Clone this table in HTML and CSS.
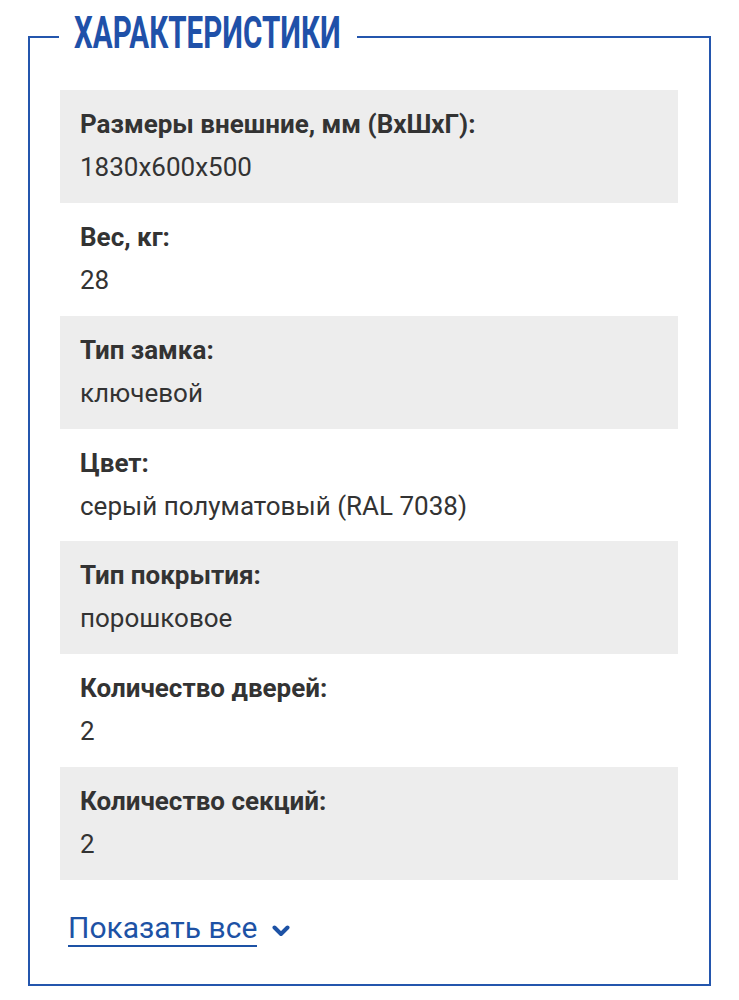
FILE: index.html
```html
<!DOCTYPE html>
<html lang="ru">
<head>
<meta charset="utf-8">
<title>Характеристики</title>
<link rel="stylesheet" href="styles.css">
</head>
<body>
<fieldset class="specs">
  <legend class="specs-title"><span class="specs-title-box"><span class="specs-title-text">ХАРАКТЕРИСТИКИ</span></span></legend>
  <div class="specs-list">
    <div class="spec spec-alt">
      <div class="spec-label">Размеры внешние, мм (ВхШхГ):</div>
      <div class="spec-value">1830x600x500</div>
    </div>
    <div class="spec">
      <div class="spec-label">Вес, кг:</div>
      <div class="spec-value">28</div>
    </div>
    <div class="spec spec-alt">
      <div class="spec-label">Тип замка:</div>
      <div class="spec-value">ключевой</div>
    </div>
    <div class="spec">
      <div class="spec-label">Цвет:</div>
      <div class="spec-value">серый полуматовый (RAL 7038)</div>
    </div>
    <div class="spec spec-alt">
      <div class="spec-label">Тип покрытия:</div>
      <div class="spec-value">порошковое</div>
    </div>
    <div class="spec">
      <div class="spec-label">Количество дверей:</div>
      <div class="spec-value">2</div>
    </div>
    <div class="spec spec-alt">
      <div class="spec-label">Количество секций:</div>
      <div class="spec-value">2</div>
    </div>
  </div>
  <a class="show-all" href="#">
    <span class="show-all-text">Показать все</span>
    <svg class="show-all-icon" width="18" height="12" viewBox="0 0 18 12" aria-hidden="true">
      <path d="M2.5 2.5 L9 9 L15.5 2.5" fill="none" stroke="currentColor" stroke-width="4" stroke-linecap="round" stroke-linejoin="round"/>
    </svg>
  </a>
</fieldset>
</body>
</html>
```

FILE: styles.css
```css
html, body {
  margin: 0;
  padding: 0;
  background: #ffffff;
}

body {
  font-family: Roboto, "Liberation Sans", Arial, sans-serif;
  color: #333333;
}

.specs {
  box-sizing: border-box;
  width: 683px;
  margin: 7px 0 0 28px;
  padding: 23px 31px 37px 30px;
  border: 2px solid #2456ad;
  min-width: 0;
}

.specs-title {
  margin-left: -1px;
  padding: 0 17px 8px 15px;
  line-height: 52px;
  font-size: 44px;
  font-weight: 700;
  color: #1f51a9;
}

.specs-title-box {
  display: inline-block;
  width: 266px;
  white-space: nowrap;
  overflow: visible;
  vertical-align: top;
}

.specs-title-text {
  display: inline-block;
  transform: scaleX(0.672);
  transform-origin: left center;
}

.specs-list {
  display: flex;
  flex-direction: column;
}

.spec {
  display: flex;
  flex-direction: column;
  gap: 9px;
  padding: 17px 20px 18.86px 20px;
  font-size: 26px;
  line-height: 34px;
}

.spec-alt {
  background: #ededed;
}

.spec-label {
  font-weight: 700;
  color: #333333;
}

.spec-value {
  font-weight: 400;
  color: #333333;
}

.show-all {
  display: inline-flex;
  align-items: center;
  gap: 15px;
  margin: 31px 0 0 8px;
  color: #1d52a5;
  text-decoration: none;
  font-size: 30px;
  line-height: 33.6px;
}

.show-all-text {
  border-bottom: 2px solid #1d52a5;
}

.show-all-icon {
  display: block;
  margin-top: 5px;
}
```
